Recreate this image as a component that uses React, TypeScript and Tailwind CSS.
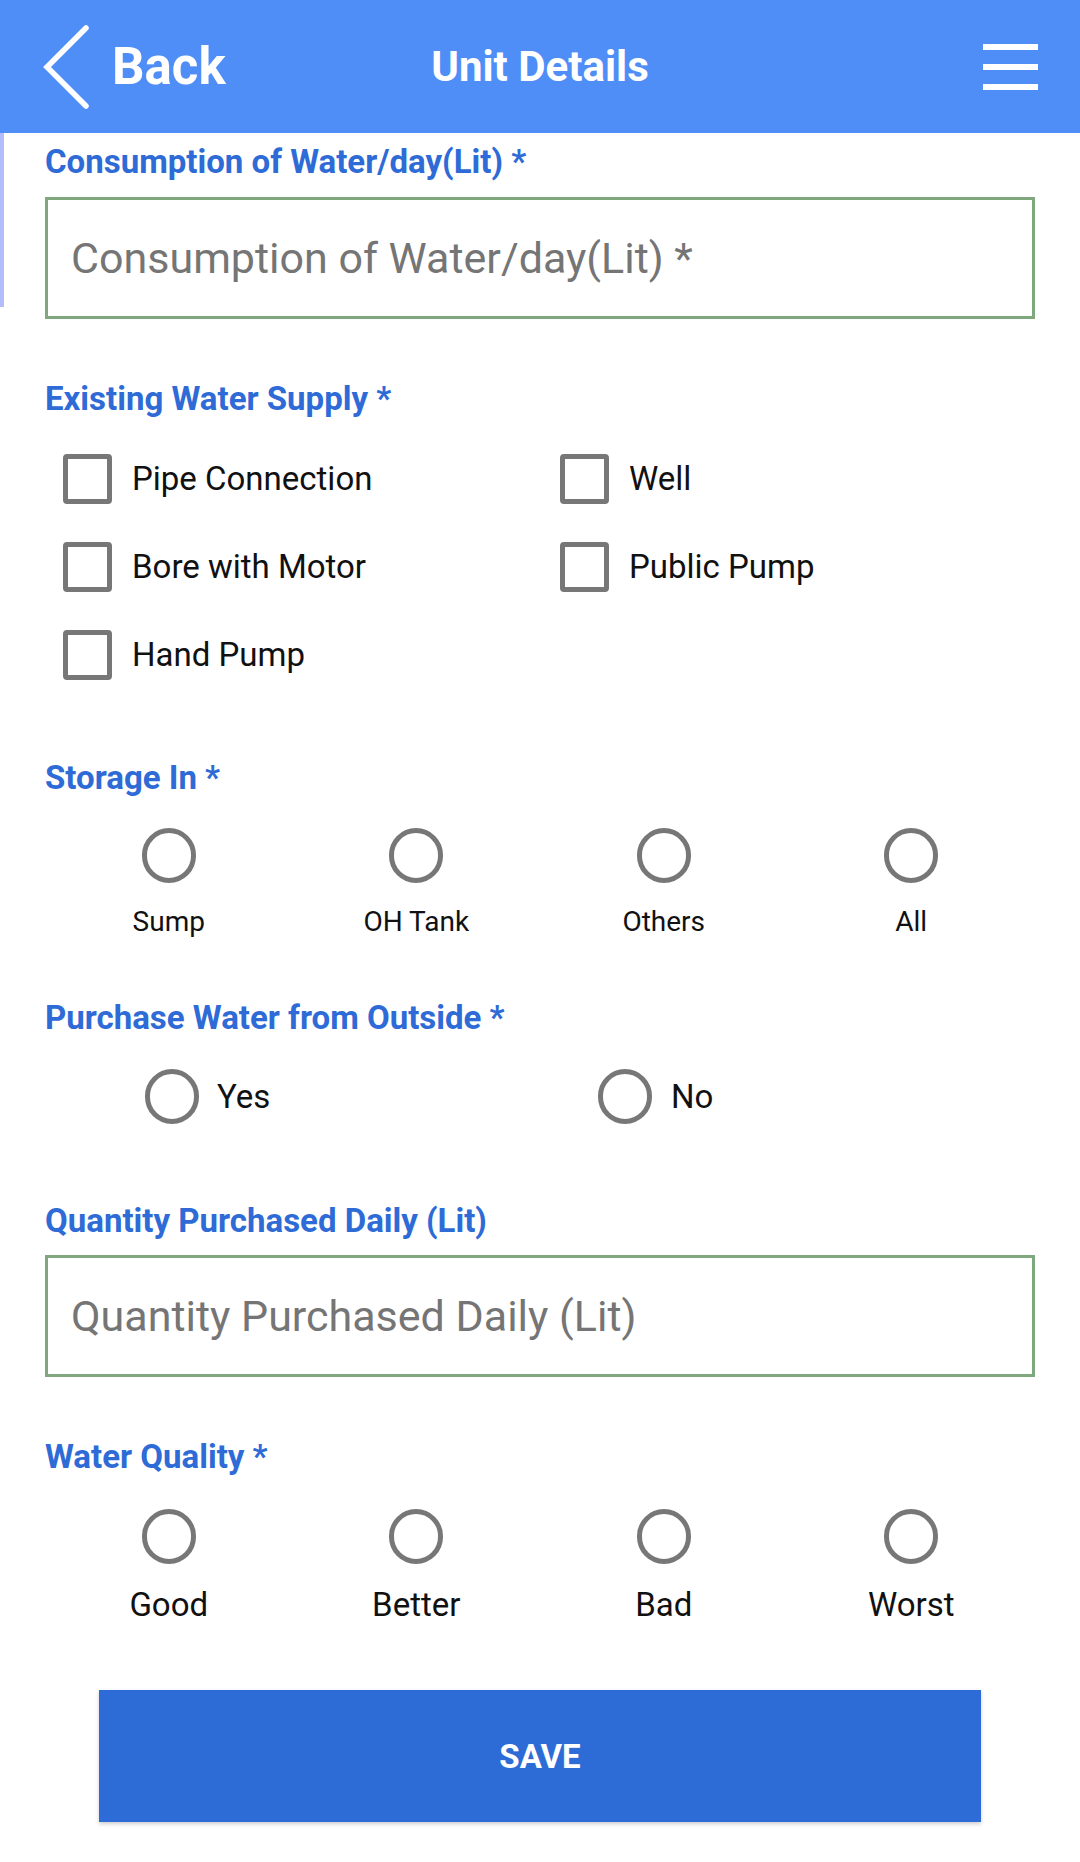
import React from "react";

const font = { fontFamily: "Roboto, 'Noto Sans', Arial, sans-serif" };

function Label({ children, className = "" }: { children: React.ReactNode; className?: string }) {
  return (
    <div className={"text-[33px] leading-[36px] font-bold text-[#2e6bd6] " + className}>
      {children}
    </div>
  );
}

function Checkbox({ label }: { label: string }) {
  return (
    <div className="flex items-center h-[88px]">
      <div className="w-[49px] h-[50px] border-[5px] border-[#777777] rounded-[4px] shrink-0" />
      <span className="ml-[20px] text-[33px] leading-[40px] text-[#111111]">{label}</span>
    </div>
  );
}

function RadioCircle() {
  return <div className="w-[54px] h-[55px] rounded-full border-[5px] border-[#777777] shrink-0" />;
}

function StackedRadios({ items, labelClass }: { items: string[]; labelClass: string }) {
  return (
    <div className="grid grid-cols-4">
      {items.map((it) => (
        <div key={it} className="flex flex-col items-center">
          <RadioCircle />
          <span className={labelClass}>{it}</span>
        </div>
      ))}
    </div>
  );
}

function TextBox({ placeholder }: { placeholder: string }) {
  return (
    <div className="h-[122px] border-[3px] border-[#80a87f] flex items-center pl-[23px]">
      <span className="text-[43px] leading-[50px] text-[#757575]">{placeholder}</span>
    </div>
  );
}

export default function App() {
  return (
    <div className="w-[1080px] h-[1862px] bg-white relative overflow-hidden" style={font}>
      <div className="h-[133px] bg-[#508ef7] flex items-center justify-between relative">
        <div className="flex items-center pl-[42px]">
          <svg width="48" height="84" viewBox="0 0 48 84" className="shrink-0">
            <path d="M44 3 L5 42 L44 81" fill="none" stroke="white" strokeWidth="5.5" strokeLinecap="round" strokeLinejoin="miter" />
          </svg>
          <span className="ml-[22px] text-[51px] font-bold text-white leading-none">Back</span>
        </div>
        <div className="absolute left-0 right-0 top-0 h-[133px] flex items-center justify-center pointer-events-none">
          <span className="text-[42px] font-bold text-white leading-none">Unit Details</span>
        </div>
        <div className="pr-[42px] flex flex-col gap-[14px]">
          <div className="w-[55px] h-[6px] bg-white" />
          <div className="w-[55px] h-[6px] bg-white" />
          <div className="w-[55px] h-[6px] bg-white" />
        </div>
      </div>

      <div className="absolute left-0 top-[133px] w-[4px] h-[174px] bg-[#b3bdfb]" />

      <div className="px-[45px]">
        <Label className="mt-[11px]">Consumption of Water/day(Lit) *</Label>
        <div className="mt-[17px]">
          <TextBox placeholder="Consumption of Water/day(Lit) *" />
        </div>

        <Label className="mt-[62px]">Existing Water Supply *</Label>
        <div className="mt-[18px] pl-[18px] grid grid-cols-[497px_1fr]">
          <Checkbox label="Pipe Connection" />
          <Checkbox label="Well" />
          <Checkbox label="Bore with Motor" />
          <Checkbox label="Public Pump" />
          <Checkbox label="Hand Pump" />
        </div>

        <Label className="mt-[61px]">Storage In *</Label>
        <div className="mt-[32px]">
          <StackedRadios
            items={["Sump", "OH Tank", "Others", "All"]}
            labelClass="mt-[23px] text-[28px] leading-[32px] text-[#111111]"
          />
        </div>

        <Label className="mt-[62px]">Purchase Water from Outside *</Label>
        <div className="mt-[33px] pl-[100px] grid grid-cols-[453px_1fr]">
          <div className="flex items-center">
            <RadioCircle />
            <span className="ml-[18px] text-[33px] leading-[40px] text-[#111111]">Yes</span>
          </div>
          <div className="flex items-center">
            <RadioCircle />
            <span className="ml-[19px] text-[33px] leading-[40px] text-[#111111]">No</span>
          </div>
        </div>

        <Label className="mt-[79px]">Quantity Purchased Daily (Lit)</Label>
        <div className="mt-[16px]">
          <TextBox placeholder="Quantity Purchased Daily (Lit)" />
        </div>

        <Label className="mt-[62px]">Water Quality *</Label>
        <div className="mt-[34px]">
          <StackedRadios
            items={["Good", "Better", "Bad", "Worst"]}
            labelClass="mt-[21px] text-[33px] leading-[40px] text-[#111111]"
          />
        </div>

        <div className="mt-[65px] px-[54px]">
          <div className="h-[132px] bg-[#2d6cd6] flex items-center justify-center shadow-[0_2px_4px_rgba(0,0,0,0.2)]">
            <span className="text-[33px] font-bold text-white leading-none">SAVE</span>
          </div>
        </div>
      </div>
    </div>
  );
}
